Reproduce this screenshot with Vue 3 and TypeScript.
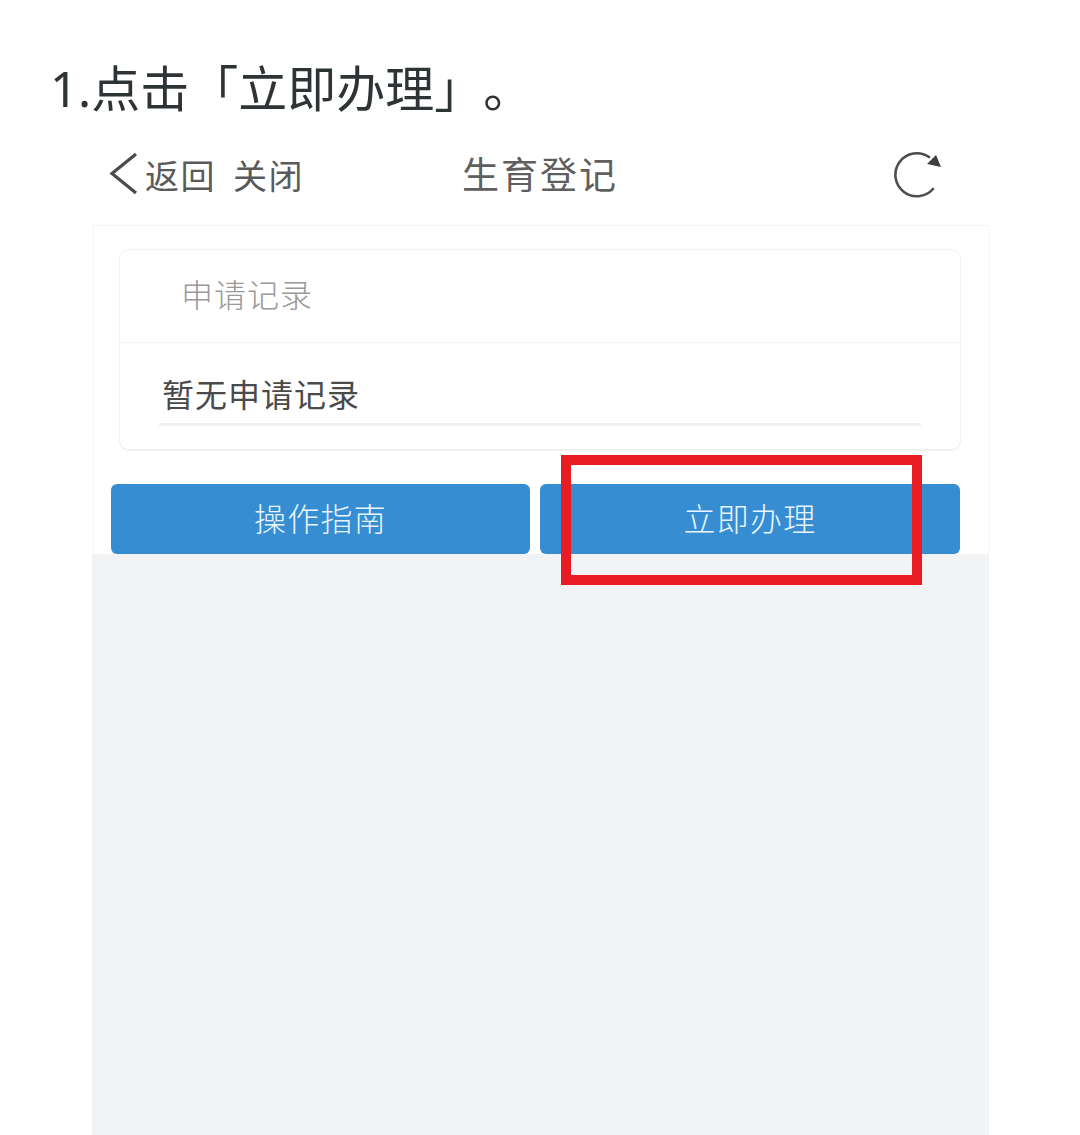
<script setup lang="ts">
const title = '生育登记'
</script>

<template>
  <div class="page">
    <h1 class="heading">1.点击「立即办理」。</h1>
    <div class="phone">
      <header class="nav">
        <div class="nav-left">
          <svg class="back" width="30" height="44" viewBox="0 0 30 44">
            <path d="M27 2 L3 21.5 L27 41" fill="none" stroke="#4a4a4a" stroke-width="3.2" />
          </svg>
          <span class="nav-link">返回</span>
          <span class="nav-link close">关闭</span>
        </div>
        <div class="nav-title">{{ title }}</div>
        <svg class="refresh" width="50" height="48" viewBox="0 0 50 48">
          <path d="M41 39 A21.5 21.5 0 1 1 37 7" fill="none" stroke="#4d4d4d" stroke-width="2.6" stroke-linecap="round" />
          <path d="M44 5 L49 17 L35 14 Z" fill="#3f3f3f" />
        </svg>
      </header>
      <main class="body">
        <section class="white">
          <div class="card">
            <div class="card-head">申请记录</div>
            <div class="card-body">
              <div class="empty">暂无申请记录</div>
            </div>
          </div>
          <div class="actions">
            <button class="btn">操作指南</button>
            <button class="btn">立即办理</button>
          </div>
        </section>
        <div class="highlight"></div>
      </main>
    </div>
  </div>
</template>

<style>
html, body { margin: 0; background: #fff; }
</style>

<style scoped>
.page {
  width: 1080px;
  height: 1135px;
  overflow: hidden;
  background: #fff;
  font-family: "Noto Sans CJK SC", "Noto Sans", sans-serif;
  box-sizing: border-box;
  padding-top: 58px;
  text-spacing-trim: space-all;
}
.heading {
  margin: 0 0 0 50px;
  font-size: 49px;
  line-height: 60px;
  font-weight: 400;
  color: #2e3436;
  font-family: "Noto Sans", "Noto Sans CJK SC", sans-serif;
}
.phone {
  margin: 27px 0 0 92px;
  width: 897px;
}
.nav {
  height: 80px;
  box-sizing: border-box;
  padding-bottom: 22px;
  display: grid;
  grid-template-columns: 1fr auto 1fr;
  align-items: center;
  color: #555;
}
.nav-left {
  display: flex;
  align-items: center;
  padding-left: 17px;
}
.back { margin-right: 6px; }
.nav-link { font-size: 34px; font-weight: 400; color: #5a5a5a; letter-spacing: 1.5px; }
.close { margin-left: 17px; }
.nav-title { font-size: 37px; font-weight: 400; letter-spacing: 2px; color: #5f5f5f; margin-top: -2px; margin-left: -1px; }
.refresh { justify-self: end; margin-right: 47px; margin-top: -1px; }
.body {
  position: relative;
  height: 910px;
  background: #f2f3f4;
}
.white {
  background: #fff;
  height: 329px;
  box-sizing: border-box;
  padding: 23px 28px 0 20px;
  border-top: 1px solid #f3f3f5;
  border-left: 1px solid #f6f6f8;
  border-right: 1px solid #f6f6f8;
  border-radius: 2px 2px 0 0;
}
.card {
  margin-left: 6px;
  width: 842px;
  height: 202px;
  box-sizing: border-box;
  border: 1px solid #f1f1f3;
  border-bottom: 2px solid #eeeff1;
  border-radius: 10px;
}
.card-head {
  height: 93px;
  box-sizing: border-box;
  padding: 0 0 7px 61px;
  display: flex;
  align-items: center;
  font-size: 32px;
  font-weight: 300;
  letter-spacing: 1px;
  color: #999;
  border-bottom: 1px solid #f3f3f5;
}
.card-body { padding: 0 39px; }
.empty {
  height: 83px;
  box-sizing: border-box;
  padding: 19px 0 0 3px;
  display: flex;
  align-items: center;
  font-size: 32px;
  font-weight: 400;
  letter-spacing: 1px;
  color: #4a4a4a;
  border-bottom: 3px solid #eff0f3;
}
.actions {
  margin-top: 33px;
  display: grid;
  grid-template-columns: 419px 420px;
  gap: 10px;
  margin-left: -2px;
}
.btn {
  height: 70px;
  border: 0;
  padding: 0 0 4px;
  border-radius: 6px;
  background: #368dd1;
  color: #e6f5ff;
  font-family: inherit;
  font-size: 32px;
  font-weight: 300;
  letter-spacing: 1.2px;
}
.highlight {
  position: absolute;
  left: 469px;
  top: 230px;
  width: 361px;
  height: 130px;
  box-sizing: border-box;
  border: 10px solid #e91c24;
}
</style>
